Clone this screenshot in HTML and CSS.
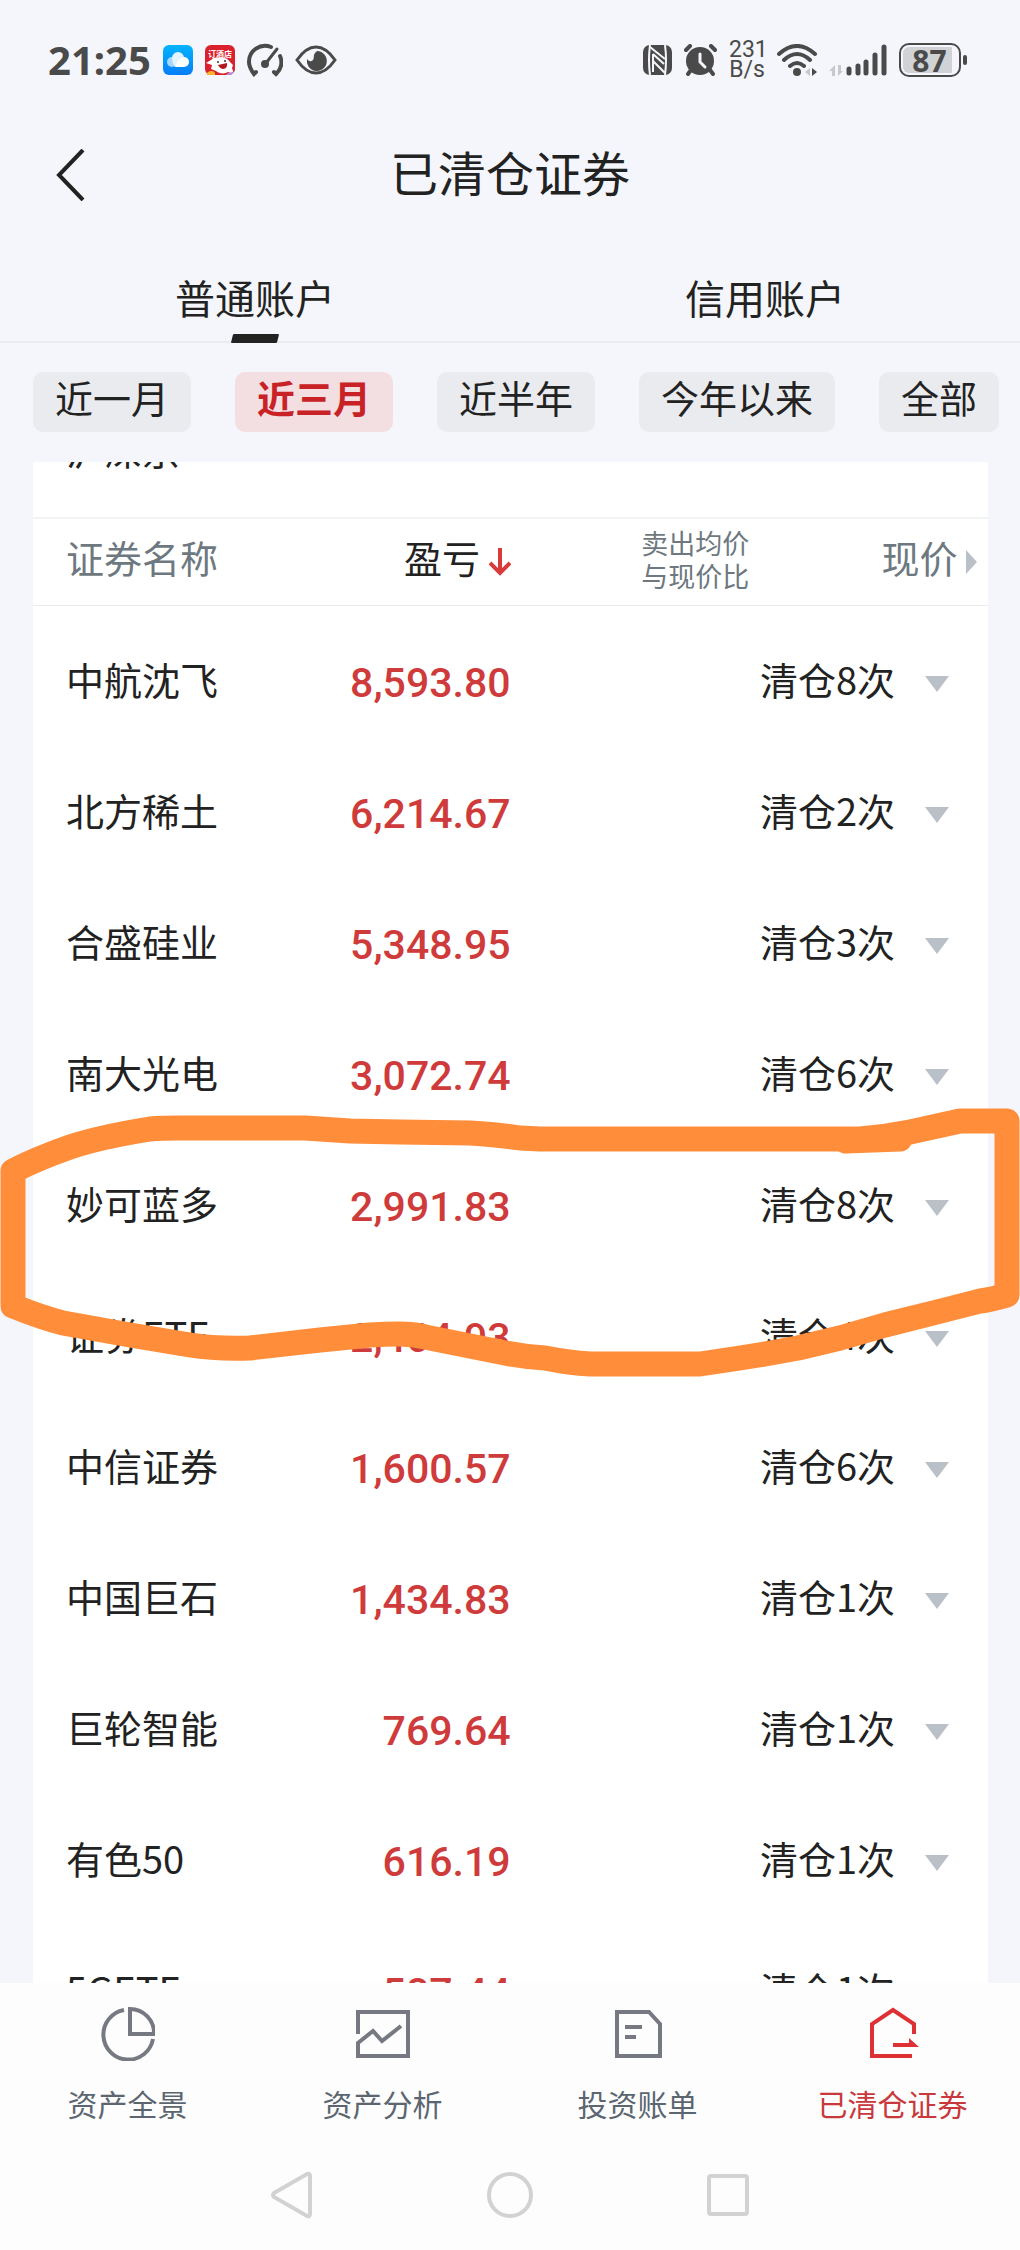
FILE: index.html
```html
<!DOCTYPE html>
<html lang="zh-CN">
<head>
  <meta charset="UTF-8">
  <meta name="viewport" content="width=device-width, initial-scale=1">
  <title>已清仓证券</title>
  <link rel="stylesheet" href="styles.css">
</head>
<body>

  <!-- status bar -->
  <div class="status-bar">
    <div class="status-left">
      <span class="clock">21:25</span>
      <svg width="30" height="30" viewBox="0 0 30 30">
        <defs>
          <linearGradient id="sky" x1="0" y1="0" x2="0" y2="1">
            <stop offset="0" stop-color="#04b4fd"/>
            <stop offset="1" stop-color="#067df8"/>
          </linearGradient>
        </defs>
        <rect width="30" height="30" rx="6" fill="url(#sky)"/>
        <circle cx="9" cy="17" r="5" fill="#a5d8ff"/>
        <path d="M9 13a6 6 0 0 1 12 0L12 22q-3-4-3-9z" fill="#e3f3ff"/>
        <path d="M12 22q3-9 9-10a5 5 0 0 1 0 10z" fill="#fff"/>
      </svg>
      <svg width="30" height="30" viewBox="0 0 30 30">
        <rect width="30" height="30" rx="6" fill="#d9202c"/>
        <text x="15" y="12" class="app-label">订酒店</text>
        <path d="M1 18l5-3c2-3 6-3 9-2 5-1 8 1 10 4l3 3-1 3 2 6-6-2c-3 2-9 2-12-1l-5-2 1-4z" fill="#fff"/>
        <circle cx="13" cy="17" r="1" fill="#333"/>
        <circle cx="20" cy="16" r="1" fill="#333"/>
        <path d="M13 20l9-2c1 7-6 8-9 2z" fill="#b3161d"/>
        <path d="M2 30v-2c3-3 7-2 8 0v2z" fill="#fbb42c"/>
        <path d="M21 30c1-2 5-3 8-3-1 2-3 3-5 3z" fill="#b98ae0"/>
      </svg>
      <svg width="36" height="34" viewBox="0 0 36 34" fill="none" stroke="#4a4a4a" stroke-width="4" stroke-linecap="round">
        <path d="M24 4A16 16 0 0 0 2 19c0 5 2 8 5 12l2-2"/>
        <path d="M33 13c3 7 1 13-4 18l-2-2"/>
        <path d="M30 6L19 20" stroke-width="3"/>
        <circle cx="18" cy="21" r="2" fill="#4a4a4a"/>
      </svg>
      <svg width="42" height="30" viewBox="0 0 42 30">
        <path d="M2 15Q11 2 21 2t19 13Q31 28 21 28T2 15z" fill="none" stroke="#4a4a4a" stroke-width="3"/>
        <path d="M22 6a10 10 0 1 1-10 8q3 4 6 1c2-3-1-5 4-9z" fill="#4a4a4a"/>
      </svg>
    </div>

    <div class="status-right">
      <svg width="29" height="30" viewBox="0 0 29 30">
        <rect width="29" height="30" rx="7" fill="#4a4a4a"/>
        <path d="M7 0q-2 15 0 30M22 0q2 15 0 30" fill="none" stroke="#f4f6fb" stroke-width="2"/>
        <path d="M7 2l15 12M10 9l11 10M10 16l12 12" stroke="#f4f6fb" stroke-width="2"/>
        <path d="M10 9v18" stroke="#f4f6fb" stroke-width="2"/>
      </svg>
      <svg width="33" height="32" viewBox="0 0 33 32" stroke="#4a4a4a" stroke-width="4" stroke-linecap="round">
        <circle cx="16" cy="17" r="14" fill="#4a4a4a" stroke="none"/>
        <path d="M2 6l4-4M31 6l-4-4M7 26l-3 4M26 26l3 4"/>
        <path d="M16 10v8l5 5" stroke="#f4f6fb" fill="none" stroke-width="3"/>
      </svg>
      <span class="net-speed">231<br>B/s</span>
      <svg width="40" height="32" viewBox="0 0 40 32" fill="none" stroke="#4a4a4a" stroke-width="4" stroke-linecap="round">
        <path d="M2 10Q20-6 38 10M7 16q13-12 26 0M13 22q7-6 14 0"/>
        <circle cx="20" cy="28" r="4" fill="#4a4a4a" stroke="none"/>
        <path d="M28 28l5-4v8z" fill="#c6c8cc" stroke="none"/>
        <path d="M35 24l5 4-5 4z" fill="#4a4a4a" stroke="none"/>
      </svg>
      <svg width="58" height="32" viewBox="0 0 58 32" stroke="#4a4a4a" stroke-width="5" stroke-linecap="round">
        <path d="M6 21v11H3v-5H0zM9 21v11l5-5h-2v-6z" fill="#c6c8cc" stroke="none"/>
        <path d="M20 25v4M29 22v7M37 18v11M46 11v18M55 3v26"/>
      </svg>
      <span class="battery"><span class="battery-level">87</span></span>
    </div>
  </div>

  <!-- title -->
  <header class="header">
    <button class="back" aria-label="返回">
      <svg width="30" height="52" viewBox="0 0 30 52" fill="none" stroke="#222" stroke-width="4">
        <path d="M28 1L4 26l24 25"/>
      </svg>
    </button>
    <h1>已清仓证券</h1>
  </header>

  <nav class="tabs">
    <a href="#" class="tab active">普通账户</a>
    <a href="#" class="tab">信用账户</a>
  </nav>

  <div class="filters">
    <button class="chip">近一月</button>
    <button class="chip active">近三月</button>
    <button class="chip">近半年</button>
    <button class="chip">今年以来</button>
    <button class="chip">全部</button>
  </div>

  <!-- list -->
  <main class="list">
    <div class="card">
      <div class="market"><span>沪深京</span></div>
      <table>
        <thead>
          <tr>
            <th class="name">证券名称</th>
            <th class="profit">盈亏
              <svg width="22" height="28" viewBox="0 0 22 28" fill="none" stroke="#d93a3a" stroke-width="4">
                <path d="M11 0v25M1 15l10 10 10-10"/>
              </svg>
            </th>
            <th class="ratio">卖出均价<br>与现价比</th>
            <th class="price">现价
              <svg width="11" height="24" viewBox="0 0 11 24"><path d="M0 0l11 12L0 24z" fill="#b9c0c7"/></svg>
            </th>
          </tr>
        </thead>
        <tbody>
          <tr><td class="name">中航沈飞</td><td class="profit">8,593.80</td><td class="times" colspan="2">清仓8次<button class="more" aria-label="展开"></button></td></tr>
          <tr><td class="name">北方稀土</td><td class="profit">6,214.67</td><td class="times" colspan="2">清仓2次<button class="more" aria-label="展开"></button></td></tr>
          <tr><td class="name">合盛硅业</td><td class="profit">5,348.95</td><td class="times" colspan="2">清仓3次<button class="more" aria-label="展开"></button></td></tr>
          <tr><td class="name">南大光电</td><td class="profit">3,072.74</td><td class="times" colspan="2">清仓6次<button class="more" aria-label="展开"></button></td></tr>
          <tr><td class="name">妙可蓝多</td><td class="profit">2,991.83</td><td class="times" colspan="2">清仓8次<button class="more" aria-label="展开"></button></td></tr>
          <tr><td class="name">证券ETF</td><td class="profit">2,464.93</td><td class="times" colspan="2">清仓4次<button class="more" aria-label="展开"></button></td></tr>
          <tr><td class="name">中信证券</td><td class="profit">1,600.57</td><td class="times" colspan="2">清仓6次<button class="more" aria-label="展开"></button></td></tr>
          <tr><td class="name">中国巨石</td><td class="profit">1,434.83</td><td class="times" colspan="2">清仓1次<button class="more" aria-label="展开"></button></td></tr>
          <tr><td class="name">巨轮智能</td><td class="profit">769.64</td><td class="times" colspan="2">清仓1次<button class="more" aria-label="展开"></button></td></tr>
          <tr><td class="name">有色50</td><td class="profit">616.19</td><td class="times" colspan="2">清仓1次<button class="more" aria-label="展开"></button></td></tr>
          <tr><td class="name">5GETF</td><td class="profit">587.44</td><td class="times" colspan="2">清仓1次<button class="more" aria-label="展开"></button></td></tr>
        </tbody>
      </table>
    </div>

    <!-- hand-drawn marker -->
    <svg class="marker" viewBox="0 1100 1020 280" preserveAspectRatio="none">
      <path d="M13 1171Q36 1159 70 1147Q100 1137 150 1129Q160 1128 180 1128H305L350 1131L400 1132L470 1133Q500 1135 520 1138L540 1139H860Q885 1137 910 1132L960 1121H1007V1295Q990 1300 980 1301L937 1312L885 1325L840 1338L798 1348L765 1354L740 1358L700 1364H590Q570 1363 545 1358Q525 1357 505 1353L430 1338Q415 1334 400 1334Q385 1334 370 1335L320 1340L250 1348Q215 1349 190 1345L130 1335L63 1323Q40 1317 13 1306Z"/>
      <path d="M846 1141L900 1139"/>
    </svg>
  </main>

  <!-- bottom navigation -->
  <nav class="bottom-nav">
    <a href="#">
      <svg width="54" height="54" viewBox="0 0 54 54">
        <path d="M23 3A25 25 0 1 0 52 32"/>
        <path d="M29 2v25h24A24 24 0 0 0 29 2z"/>
      </svg>
      资产全景
    </a>
    <a href="#">
      <svg width="54" height="54" viewBox="0 0 54 54">
        <path d="M2 27V5h50v44H2V36l15-12 9 10 19-15"/>
      </svg>
      资产分析
    </a>
    <a href="#">
      <svg width="54" height="54" viewBox="0 0 54 54">
        <path d="M6 5h32l11 12v32H6zM14 20h17M14 30h11"/>
      </svg>
      投资账单
    </a>
    <a href="#" class="active">
      <svg width="54" height="54" viewBox="0 0 54 54">
        <path d="M46 49H6V17L27 3l21 14v10M27 38h20"/>
        <path d="M43 31l10 9H43z" class="solid"/>
      </svg>
      已清仓证券
    </a>
  </nav>

  <div class="system-nav">
    <button aria-label="返回">
      <svg width="48" height="48" viewBox="0 0 48 48"><path d="M6 22L39 3q3-1 3 2v38q0 3-3 2L6 26q-2-2 0-4z"/></svg>
    </button>
    <button aria-label="主页">
      <svg width="48" height="48" viewBox="0 0 48 48"><circle cx="24" cy="24" r="21"/></svg>
    </button>
    <button aria-label="最近任务">
      <svg width="48" height="48" viewBox="0 0 48 48"><rect x="5" y="5" width="38" height="38" rx="2"/></svg>
    </button>
  </div>

</body>
</html>
```
FILE: styles.css
```css
* {
  margin: 0; padding: 0; box-sizing: border-box;
}

body {
  height: 100vh;
  display: flex;
  flex-direction: column;
  overflow: hidden;
  font-family: "Noto Sans CJK SC", sans-serif;
  background: #f4f6fb;
  color: #222;
}

svg {
  display: block;
  flex: none;
}

a {
  color: inherit;
  text-decoration: none;
}

button {
  border: none;
  background: none;
  font: inherit;
  color: inherit;
  cursor: pointer;
}

/* status bar */
.status-bar {
  flex: none;
  height: 120px;
  padding: 0 53px 0 48px;
  display: flex;
  align-items: center;
  justify-content: space-between;
  color: #4a4a4a;
}

.status-left, .status-right {
  display: flex;
  align-items: center;
  gap: 12px;
}

.clock {
  font: bold 40px/40px "Noto Sans", sans-serif;
}

.app-label {
  font-size: 8px;
  font-weight: bold;
  fill: #fff;
  text-anchor: middle;
}

.net-speed {
  width: 36px;
  font: 400 23px/20px Roboto, sans-serif;
  text-align: center;
}

.battery {
  position: relative;
  width: 62px;
  height: 34px;
  margin-right: 6px;
  padding: 2px 7px 2px 2px;
  border: 2px solid #4a4a4a;
  border-radius: 10px;
}

.battery::after {
  content: "";
  position: absolute;
  right: -8px;
  top: 10px;
  width: 4px;
  height: 10px;
  border-radius: 2px;
  background: #4a4a4a;
}

.battery-level {
  display: block;
  height: 26px;
  padding-left: 4px;
  border-radius: 6px 0 0 6px;
  background: #d0d2d5;
  font: bold 30px/27px "Noto Sans", sans-serif;
  text-align: center;
}

/* title */
.header {
  flex: none;
  height: 108px;
  padding: 0 55px;
  display: grid;
  grid-template-columns: 30px 1fr 30px;
  align-items: center;
}

.header h1 {
  padding-bottom: 6px;
  font-size: 48px;
  font-weight: 400;
  line-height: 60px;
  text-align: center;
}

.back {
  padding-top: 2px;
}

.tabs {
  flex: none;
  display: flex;
  border-bottom: 2px solid #e9ebee;
}

.tab {
  position: relative;
  flex: 1;
  padding: 39px 0 14px;
  font-size: 40px;
  line-height: 60px;
  text-align: center;
}

.tab.active::after {
  content: "";
  position: absolute;
  left: calc(50% - 23px);
  bottom: -2px;
  width: 46px;
  height: 9px;
  border-radius: 1px;
  background: #222;
  transform: skewX(-14deg);
}

.filters {
  flex: none;
  display: flex;
  gap: 44px;
  padding: 29px 0 30px 33px;
  overflow: hidden;
}

.chip {
  flex: none;
  height: 60px;
  padding: 0 22px 10px;
  border-radius: 10px;
  background: #eaebef;
  font-size: 38px;
  line-height: 50px;
}

.chip.active {
  background: #f3dfe2;
  color: #c92226;
  font-weight: 700;
}

/* list */
.list {
  position: relative;
  flex: 1;
  min-height: 0;
  padding: 0 32px 0 33px;
  overflow: hidden;
}

.card {
  background: #fff;
}

.market {
  height: 55px;
  overflow: hidden;
}

.market span {
  display: block;
  margin: -40px 33px 0;
  font-size: 38px;
  line-height: 54px;
}

table {
  width: 100%;
  table-layout: fixed;
  border-collapse: collapse;
  font-size: 38px;
  line-height: 54px;
}

th {
  height: 87px;
  padding-bottom: 10px;
  border-top: 2px solid #f2f3f5;
  border-bottom: 1px solid #e9ebee;
  font-weight: 400;
  color: #6e7880;
  text-align: right;
  white-space: nowrap;
}

th svg {
  display: inline-block;
  vertical-align: middle;
}

th.name, td.name {
  padding-left: 33px;
  text-align: left;
}

th.profit {
  color: #222;
}

th.ratio {
  padding-bottom: 6px;
  font-size: 27px;
  line-height: 33px;
}

th.price {
  padding-right: 11px;
}

tbody::before {
  content: "";
  display: table-row;
  height: 12px;
}

td {
  height: 131px;
  padding-bottom: 8px;
  white-space: nowrap;
}

td.profit {
  padding-bottom: 0;
  font-family: Roboto, sans-serif;
  font-size: 41px;
  font-weight: 500;
  color: #cf3b3b;
  text-align: right;
}

td.times {
  padding-right: 39px;
  text-align: right;
}

.more {
  margin-left: 30px;
  border: 12px solid transparent;
  border-top: 16px solid #b9c0c7;
  border-bottom: none;
  vertical-align: middle;
}

.marker {
  position: absolute;
  left: 0;
  top: 638px;
  width: 100%;
  height: 280px;
  fill: none;
  stroke: #ff8d3a;
  stroke-width: 25px;
  stroke-linejoin: round;
  stroke-linecap: round;
  pointer-events: none;
}

/* bottom navigation */
.bottom-nav {
  flex: none;
  display: flex;
  padding: 24px 0 27px;
  background: #fdfdfe;
  color: #5b6670;
}

.bottom-nav a {
  flex: 1;
  display: flex;
  flex-direction: column;
  align-items: center;
  gap: 20px;
  font-size: 30px;
  line-height: 44px;
}

.bottom-nav svg {
  fill: none;
  stroke: #777982;
  stroke-width: 4px;
}

.bottom-nav .active {
  color: #c9383b;
}

.bottom-nav .active svg {
  stroke: #dd3135;
}

.bottom-nav .solid {
  fill: #dd3135;
  stroke: none;
}

.system-nav {
  flex: none;
  display: grid;
  grid-template-columns: repeat(3, 1fr);
  justify-items: center;
  align-items: center;
  height: 98px;
  padding: 0 18% 12px;
  background: #fdfdfe;
}

.system-nav svg {
  fill: none;
  stroke: #d2d2d2;
  stroke-width: 4px;
}
```
